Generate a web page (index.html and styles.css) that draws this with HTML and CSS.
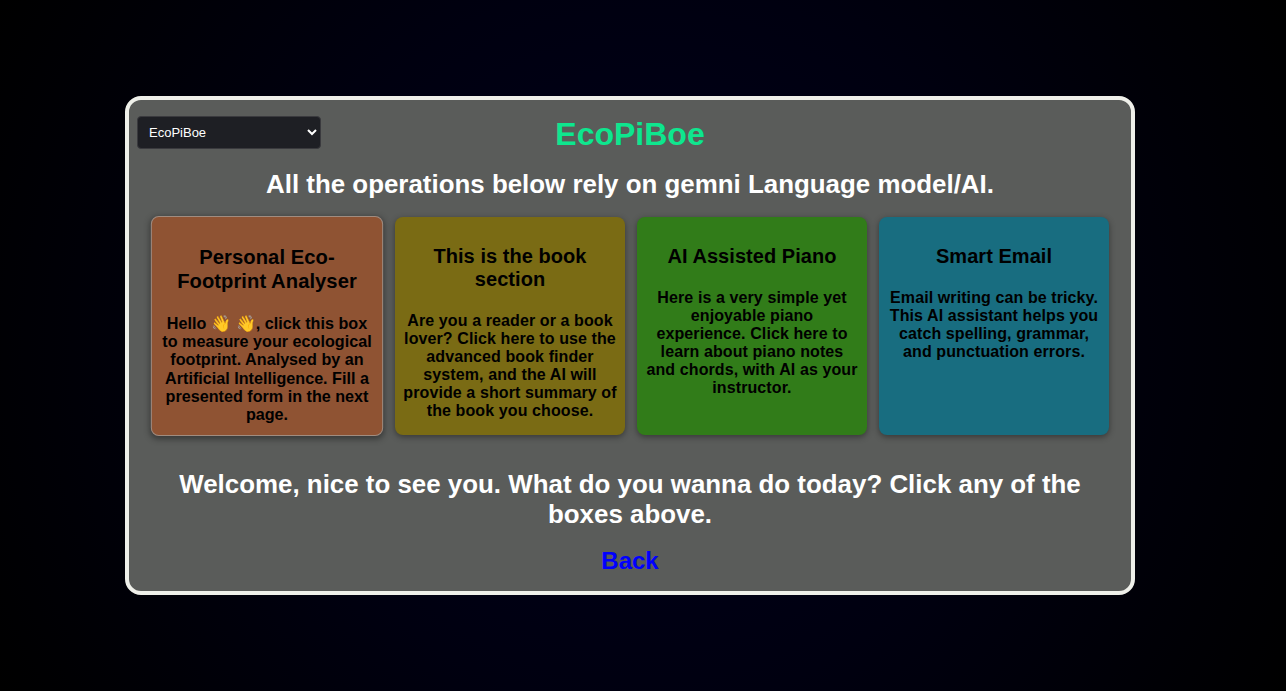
FILE: index.html
```html
<!DOCTYPE html>
<html lang="en">
<head>
  <meta charset="UTF-8" />
  <meta name="viewport" content="width=device-width, initial-scale=1.0" />
  <title>EcoPiBoe</title>
  <link rel="stylesheet" href="styles.css">
</head>
<body>
  <main class="panel">
    <header class="top">
      <select class="site-select">
        <option>EcoPiBoe</option>
      </select>
      <h1 class="brand">EcoPiBoe</h1>
    </header>
    <h2 class="notice">All the operations below rely on gemni Language model/AI.</h2>

    <section class="cards">
      <a class="card card-eco" href="#">
        <h3>Personal Eco-Footprint Analyser</h3>
        <p>Hello 👋 👋, click this box to measure your ecological footprint. Analysed by an Artificial Intelligence. Fill a presented form in the next page.</p>
      </a>
      <a class="card card-book" href="#">
        <h3>This is the book section</h3>
        <p>Are you a reader or a book lover? Click here to use the advanced book finder system, and the AI will provide a short summary of the book you choose.</p>
      </a>
      <a class="card card-piano" href="#">
        <h3>AI Assisted Piano</h3>
        <p>Here is a very simple yet enjoyable piano experience. Click here to learn about piano notes and chords, with AI as your instructor.</p>
      </a>
      <a class="card card-email" href="#">
        <h3>Smart Email</h3>
        <p>Email writing can be tricky. This AI assistant helps you catch spelling, grammar, and punctuation errors.</p>
      </a>
    </section>

    <h2 class="welcome">Welcome, nice to see you. What do you wanna do today? Click any of the boxes above.</h2>
    <a class="back" href="#">Back</a>
  </main>
</body>
</html>
```

FILE: styles.css
```css
* { box-sizing: border-box; }
html, body { height: 100%; }
body { margin: 0; display: flex; align-items: center; justify-content: center; padding-right: 26px; font-family: "Liberation Sans", Arial, sans-serif; background: radial-gradient(circle at center, #00001c 0%, #000010 50%, #000 100%); }

.panel { width: 1010px; height: 499px; padding: 16px 8px 0; background: #5a5c5a; border: 4px solid #eff0ea; border-radius: 16px; text-align: center; }

.top { display: grid; grid-template-columns: 1fr auto 1fr; align-items: start; }
.site-select { width: 184px; height: 33px; padding: 0 7px; background: #1e1f24; color: #fff; border: 1px solid #3a3a3e; border-radius: 4px; font-size: 13px; font-family: "Liberation Sans", Arial, sans-serif; }

.brand { margin: 0; font-size: 32px; line-height: 37px; color: #0ee68e; }
.notice { margin: 16px 0 0; font-size: 25.9px; line-height: 30px; color: #fff; }

.cards { display: grid; grid-template-columns: repeat(4, 230px); gap: 12px; margin-top: 18px; padding-left: 16px; }
.card { height: 218px; padding: 0 7px; border-radius: 8px; color: #000; text-decoration: none; font-weight: bold; box-shadow: 0 2px 6px rgba(0, 0, 0, 0.4); }
.card h3 { margin: 28px 0 0; font-size: 20px; line-height: 23px; letter-spacing: 0.05px; }
.card p { margin: 21px 0 0; font-size: 16px; line-height: 18px; letter-spacing: 0.1px; }
.card-eco { background: #8f5333; border: 1px solid #a08c80; transform: translateX(-1px) scale(1.01); }
.card-eco h3 { margin-top: 28.5px; }
.card-eco p { margin-top: 22.5px; padding: 0 2px; letter-spacing: 0; }
.card-book { background: #7a6b14; }
.card-piano { background: #317c19; }
.card-email { background: #186d80; }

.welcome { margin: 34px 30px 0; font-size: 25.9px; line-height: 30px; color: #fff; }
.back { display: block; margin-top: 18px; font-size: 24px; line-height: 28px; font-weight: bold; color: #0000ff; text-decoration: none; }
```
